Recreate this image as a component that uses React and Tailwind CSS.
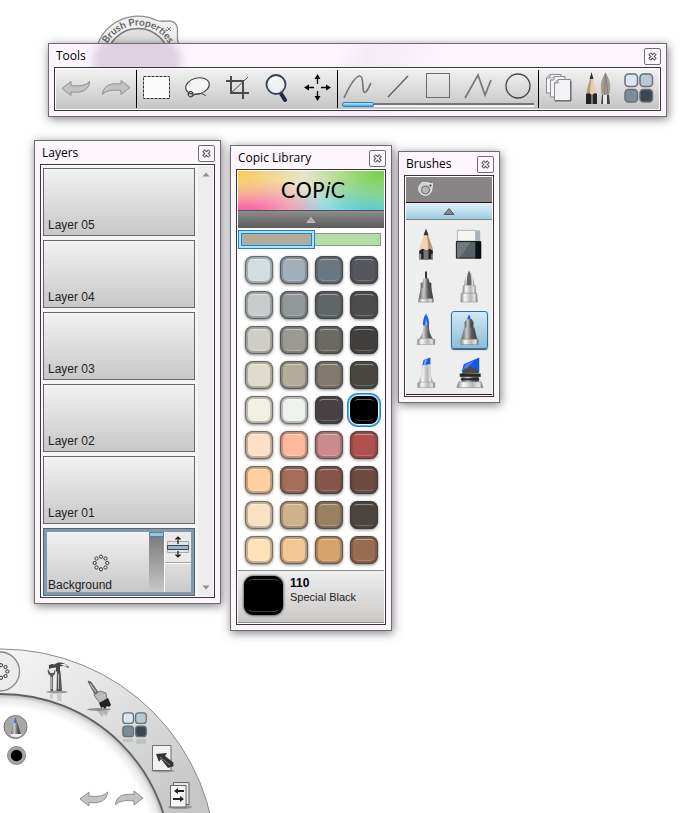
import React from "react";

const layers = ["Layer 05", "Layer 04", "Layer 03", "Layer 02", "Layer 01"];

const swatches = [
  "bg-[#d3dcde]", "bg-[#a2afba]", "bg-[#6b7780]", "bg-[#55565c]",
  "bg-[#c8cccc]", "bg-[#92989a]", "bg-[#606668]", "bg-[#4c4c4c]",
  "bg-[#cecdc7]", "bg-[#9a9993]", "bg-[#6a6964]", "bg-[#403f3d]",
  "bg-[#e0dacb]", "bg-[#b3ac9a]", "bg-[#81796e]", "bg-[#4a4740]",
  "bg-[#f2f0e2]", "bg-[#eef1ed]", "bg-[#474143]", "bg-[#000000]",
  "bg-[#fee0c6]", "bg-[#ffb99d]", "bg-[#cb8a8c]", "bg-[#b1504c]",
  "bg-[#ffcf9f]", "bg-[#a46c5a]", "bg-[#82564a]", "bg-[#6c4a42]",
  "bg-[#f9e2c1]", "bg-[#d1b18a]", "bg-[#988060]", "bg-[#4c443f]",
  "bg-[#ffe2b9]", "bg-[#f3c794]", "bg-[#d5a26b]", "bg-[#996b4f]",
];

function Panel({ title, place, children, backdrop }) {
  return (
    <section
      aria-label={title}
      className={`absolute border border-[#6f6b72] bg-[#fcf5fc] px-[5px] pb-[5px] shadow-[1px_2px_9px_rgba(0,0,0,0.5)] ${place}`}
    >
      {backdrop}
      <header className="relative flex h-[23px] items-center justify-between pl-0.5">
        <h2 className="font-['Open_Sans',sans-serif] text-xs leading-4 text-black">{title}</h2>
        <button
          aria-label={`Close ${title}`}
          className="mt-px flex size-[17px] items-center justify-center rounded-[2px] border border-[#716d76] bg-[#fdf9fe]"
        >
          <svg width="9" height="9" viewBox="0 0 9 9" fill="none">
            <path d="M1.5 1.5 7.5 7.5M7.5 1.5 1.5 7.5" stroke="#53535f" strokeWidth="3.6" />
            <path d="M2 2 7 7M7 2 2 7" stroke="#fff" strokeWidth="1.4" />
          </svg>
        </button>
      </header>
      <div className="relative border border-[#37373a] bg-white p-px">{children}</div>
    </section>
  );
}

function TurnArrow({ forward }) {
  return (
    <svg width="30" height="18" viewBox="0 0 30 18">
      <g transform={forward ? "rotate(180 15 9)" : undefined}>
        <TurnArrowShape />
      </g>
    </svg>
  );
}

function TurnArrowShape() {
  return (
    <path
      d="M1 9.500 10 2.500V6.500C17 7.500 25 7 28.500 2.500C28.500 10 22 14.500 10 13V16.500Z"
      fill="#c3c3c3"
      stroke="#8f8f8f"
      strokeLinejoin="round"
    />
  );
}

function FourSwatches() {
  return (
    <g stroke="#667078" strokeWidth="1.5">
      <rect x="1" y="1" width="12.500" height="12.500" rx="3.500" fill="#dce6ec" />
      <rect x="16" y="1" width="12.500" height="12.500" rx="3.500" fill="#b8cad3" />
      <rect x="1" y="16.500" width="12.500" height="12.500" rx="3.500" fill="#7b8c97" />
      <rect x="16" y="16.500" width="12.500" height="12.500" rx="3.500" fill="#3b4750" />
    </g>
  );
}

const icons = {
  marquee: (
    <svg width="28" height="24" viewBox="0 0 28 24">
      <rect x=".5" y=".5" width="26" height="22" fill="#f9f9f9" stroke="#333" strokeDasharray="3 1" />
    </svg>
  ),
  lasso: (
    <svg width="28" height="24" viewBox="0 0 28 24" fill="none" stroke="#3e3e3e">
      <ellipse cx="14.500" cy="10" rx="12" ry="8" transform="rotate(-14 14.500 10)" fill="#f4f4f4" strokeWidth="1.100" />
      <path d="M4 15C7 19 12 18 9 16 5 14 4 20 7 21 11 21 11 17 15 18 19 17 20 18 23 20" />
      <circle cx="7.500" cy="18" r="2.500" />
    </svg>
  ),
  crop: (
    <svg width="25" height="25" viewBox="0 0 25 25" fill="none" stroke="#4a4a4a">
      <path d="M6 1V18H24M1 6H18V24" strokeWidth="2" />
      <path d="M5 19 23 2" />
    </svg>
  ),
  zoom: (
    <svg width="24" height="28" viewBox="0 0 24 28">
      <path d="m15 18 5 8" stroke="#222b3d" strokeWidth="4" strokeLinecap="round" />
      <circle cx="11" cy="10.500" r="9.500" fill="#eef0f1" stroke="#34405a" strokeWidth="1.800" />
      <path d="M5 9A7 7 0 0 1 13 4" stroke="#fff" strokeWidth="2" fill="none" />
    </svg>
  ),
  move: (
    <svg width="27" height="27" viewBox="0 0 27 27">
      <path d="M13.500 3V10M13.500 17V24M3 13.500H10M17 13.500H24" stroke="#000" strokeWidth="1.300" />
      <path d="m13.500 0 3 5h-6zM13.500 27l3-5h-6zM0 13.500l5-3v6zM27 13.500l-5-3v6z" />
    </svg>
  ),
  curve: (
    <svg width="30" height="26" viewBox="0 0 30 26" fill="none">
      <path d="M1 25C6 14 12 3 17 3 21 3 19 17 21 19 23 21 26 14 28 10" stroke="#777" strokeWidth="1.700" />
    </svg>
  ),
  line: (
    <svg width="22" height="24" viewBox="0 0 22 24">
      <path d="M1 23 21 2" stroke="#666" strokeWidth="1.500" />
    </svg>
  ),
  square: (
    <svg width="24" height="25" viewBox="0 0 24 25">
      <rect x=".5" y=".5" width="23" height="24" fill="none" stroke="#6b6b6b" />
    </svg>
  ),
  zigzag: (
    <svg width="28" height="26" viewBox="0 0 28 26" fill="none">
      <path d="M1 25 14 2 21 22 27 7" stroke="#777" strokeWidth="1.700" />
    </svg>
  ),
  circle: (
    <svg width="26" height="26" viewBox="0 0 26 26">
      <circle cx="13" cy="13" r="12" fill="none" stroke="#454545" strokeWidth="1.300" />
    </svg>
  ),
  pages: (
    <svg width="28" height="29" viewBox="0 0 28 29" stroke="#8a8a8e">
      <path d="M5 1.500H16V20H1.500V5Z" fill="#f6f6f6" />
      <path d="M9 3.500H20V24H5.500V7Z" fill="#f6f6f6" />
      <path d="M13 6.500H25.500V27.500H9.500V10Z" fill="#f1f3f7" />
      <path d="M9.500 10H13V6.500M5.500 7H9V3.500M1.500 5H5V1.500" fill="none" />
      <path d="M10 28H26V8" stroke="#5f5f62" fill="none" />
    </svg>
  ),
  brushes: (
    <svg width="28" height="32" viewBox="0 0 28 32">
      <path d="M6.500 1 1 22h11z" fill="#e6cdb0" />
      <path d="M6.500 1 1 22l4-1z" fill="#b39a84" />
      <path d="M6.500 0 4.700 7h3.800z" fill="#333" />
      <path d="m1 22 3-1 3 2 3-2 2 1v10H1z" fill="#222" />
      <path d="M6 23h2v9H6z" fill="#777" />
      <path d="M20.500 0C15 10 15 15 17 23h7c2-8 2-13-3.500-23" fill="#a59c91" />
      <path d="m20.500 1-1 21M21 5l2 17" stroke="#7d756c" strokeWidth=".8" />
      <path d="M17 23h7l2 9H15z" fill="#e3e5e6" />
      <path d="M22 23h2l1 9h-3zM17 23h1v9h-2z" fill="#3e4245" />
    </svg>
  ),
  palette: (
    <svg width="30" height="30" viewBox="0 0 30 30"><FourSwatches /></svg>
  ),
};

function ToolButton({ label, children }) {
  return (
    <button aria-label={label} className="flex h-9 flex-1 items-center justify-center pb-[3px]">
      {children}
    </button>
  );
}

function Divider() {
  return <span className="h-[38px] w-px shrink-0 bg-black" />;
}

function ToolsPanel() {
  return (
    <Panel
      title="Tools"
      place="left-12 top-[43px] w-[619px]"
      backdrop={
        <div className="absolute inset-0 overflow-hidden bg-linear-115 from-[#fcf5fd] from-45% via-[#f4ecf4] via-50% to-[#fdf5fd] to-62%">
          <div className="absolute -top-2 left-11 h-10 w-22 rounded-t-3xl bg-[#ded1e0] blur-[4px]" />
        </div>
      }
    >
      <div className="flex h-10 items-center bg-linear-to-b from-[#f2f2f2] to-[#c5c5c5]">
        <div className="flex w-20 items-center">
          <ToolButton label="Undo"><TurnArrow /></ToolButton>
          <ToolButton label="Redo"><TurnArrow forward /></ToolButton>
        </div>
        <Divider />
        <div className="flex w-[200px] items-center">
          <ToolButton label="Rectangle select">{icons.marquee}</ToolButton>
          <ToolButton label="Lasso">{icons.lasso}</ToolButton>
          <ToolButton label="Crop">{icons.crop}</ToolButton>
          <ToolButton label="Zoom">{icons.zoom}</ToolButton>
          <ToolButton label="Move">{icons.move}</ToolButton>
        </div>
        <Divider />
        <div className="flex h-10 w-[200px] flex-col">
          <div className="flex h-8 items-start">
            <ToolButton label="Freehand">{icons.curve}</ToolButton>
            <ToolButton label="Line">{icons.line}</ToolButton>
            <ToolButton label="Rectangle">{icons.square}</ToolButton>
            <ToolButton label="Polyline">{icons.zigzag}</ToolButton>
            <ToolButton label="Ellipse">{icons.circle}</ToolButton>
          </div>
          <div className="ml-1 mt-px flex h-[5px] w-48 items-center">
            <span className="h-[5px] w-8 rounded-[2px] border border-[#2c7fb8] bg-linear-to-b from-[#b9e5fc] to-[#3fa9ea]" />
            <span className="h-1 flex-1 border-b-2 border-[#f4f4f4] bg-[#747474]" />
          </div>
        </div>
        <Divider />
        <div className="flex flex-1 items-center">
          <ToolButton label="Layers">{icons.pages}</ToolButton>
          <ToolButton label="Brushes">{icons.brushes}</ToolButton>
          <ToolButton label="Colors">{icons.palette}</ToolButton>
        </div>
      </div>
    </Panel>
  );
}

function LayersPanel() {
  return (
    <Panel title="Layers" place="left-[34px] top-[140px] w-[187px]">
      <div className="flex justify-between bg-[#f5f5f5] pl-px">
        <div className="flex w-[152px] flex-col gap-1 pt-0.5 font-['Liberation_Sans',Arial,sans-serif] text-xs leading-4 text-[#222]">
          {layers.map((name) => (
            <button
              key={name}
              className="flex h-[68px] items-end border border-[#69696b] bg-linear-to-b from-[#f2f2f2] to-[#c8c8c8] px-1 pb-0.5 text-left"
            >
              {name}
            </button>
          ))}
          <div className="flex h-[68px] border border-[#5b656d] bg-[#809aad] p-[3px]">
            <button className="relative flex flex-1 items-end bg-linear-to-b from-[#f2f2f2] to-[#c8c8c8] pl-px text-left leading-[14px]">
              Background
              <svg className="absolute right-[39px] top-[22px]" width="18" height="18" viewBox="0 0 18 18">
                <DotRing />
              </svg>
            </button>
            <input
              type="range"
              aria-label="Background opacity"
              defaultValue="100"
              className="m-0 h-full w-4 appearance-none border-r border-white bg-linear-to-b from-[#777] to-[#c8c8c8] [direction:rtl] [writing-mode:vertical-lr] [&::-webkit-slider-thumb]:h-[5px] [&::-webkit-slider-thumb]:w-[15px] [&::-webkit-slider-thumb]:appearance-none [&::-webkit-slider-thumb]:border [&::-webkit-slider-thumb]:border-[#4c84a6] [&::-webkit-slider-thumb]:bg-[#9dc4dc]"
            />
            <div className="flex w-[26px] flex-col bg-[#e9e9e9]">
              <button aria-label="Reorder layer" className="flex h-[31px] items-center justify-center border-b border-[#aaa59c]">
                <svg width="24" height="24" viewBox="0 0 24 24">
                  <path d="M1.500 6.500h21v11h-21z" fill="#e3e3e3" stroke="#aaa" />
                  <path d="M1.500 10.500h21v4h-21z" fill="#9db6c6" stroke="#314858" />
                  <path d="M12 9V2M9.500 4.500 12 2l2.500 2.500M12 16v6M9.500 19.500 12 22l2.500-2.500" fill="none" stroke="#111" strokeWidth="1.200" />
                </svg>
              </button>
              <span className="flex-1 border-t border-white bg-linear-to-b from-[#dedede] to-[#cacaca]" />
            </div>
          </div>
        </div>
        <div className="flex w-[15px] flex-col items-center justify-between bg-[#ededed] py-1.5">
          <button aria-label="Scroll up">
            <svg width="8" height="5" viewBox="0 0 8 5"><path d="m4 .5 3.500 4h-7z" fill="#8d8d8d" /></svg>
          </button>
          <button aria-label="Scroll down">
            <svg width="8" height="5" viewBox="0 0 8 5"><path d="m4 4.500 3.500-4h-7z" fill="#8d8d8d" /></svg>
          </button>
        </div>
      </div>
    </Panel>
  );
}

function DotRing() {
  return (
    <g fill="#eee" stroke="#333">
      <circle cx="9" cy="2.700" r="1.600" />
      <circle cx="13.500" cy="4.500" r="1.600" />
      <circle cx="15.300" cy="9" r="1.600" />
      <circle cx="13.500" cy="13.500" r="1.600" />
      <circle cx="9" cy="15.300" r="1.600" />
      <circle cx="4.500" cy="13.500" r="1.600" />
      <circle cx="2.700" cy="9" r="1.600" />
      <circle cx="4.500" cy="4.500" r="1.600" />
    </g>
  );
}

function CopicPanel() {
  return (
    <Panel title="Copic Library" place="left-[230px] top-[145px] w-[162px]">
      <div className="flex h-[39px] items-center justify-center bg-[radial-gradient(45%_90%_at_0%_0%,#ffc94f,transparent),radial-gradient(55%_95%_at_5%_110%,#ff4fa0,transparent),radial-gradient(55%_120%_at_100%_0%,#6fd044,transparent),radial-gradient(60%_100%_at_90%_110%,#3fccf5,transparent)] bg-[#e9e4cc]">
        <span className="pl-1 font-['DejaVu_Sans',sans-serif] text-[21px] leading-6 text-black">
          COP<i>i</i>C
        </span>
      </div>
      <button
        aria-label="Collapse library"
        className="flex h-[18px] w-full items-center justify-center border-t border-[#555] bg-linear-to-b from-[#8d8d8d] to-[#5b5b5b]"
      >
        <svg width="10" height="6" viewBox="0 0 10 6"><path d="m5 .5 4 5H1z" fill="#aaa" stroke="#ddd" strokeWidth=".7" /></svg>
      </button>
      <div className="flex items-center pr-[3px] pt-0.5">
        <button aria-label="Warm gray set" className="h-[19px] w-[77px] border border-[#1b83d4] bg-[#aee0fc] p-0.5">
          <span className="block h-full border border-[#1b83d4] bg-[#b3ac9a]" />
        </button>
        <button aria-label="Green set" className="h-[13px] flex-1 border border-l-0 border-[#8b9b87] bg-[#b0dea5]" />
      </div>
      <div className="grid grid-cols-4 gap-[7px] py-[7px] pl-[7px] pr-1.5">
        {swatches.map((tone, i) => (
          <button
            key={i}
            aria-label={`Swatch ${i + 1}`}
            className={`flex size-7 items-center justify-center rounded-[8px] ${tone} ${
              i === 19
                ? "shadow-[0_0_0_1px_#e8f6ff,0_0_0_2px_#5bb8ff,0_0_0_3px_#1b83d4]"
                : "shadow-[inset_0_0_1px_1px_rgba(50,50,50,0.6),inset_0_0_0_4px_rgba(70,70,70,0.3),0_1px_3px_rgba(0,0,0,0.5)]"
            }`}
          >
            <span className={`size-[22px] rounded-[5px] border border-x-transparent border-b-white/20 border-t-white/40 ${tone}`} />
          </button>
        ))}
      </div>
      <div className="-mt-px flex h-[53px] gap-[7px] border-y border-[#8e8e8e] bg-linear-to-b from-[#efefef] to-[#cbc9c8] pl-1.5 pt-1">
        <span className="mt-px flex size-[39px] items-center justify-center rounded-[9px] bg-black shadow-[0_0_3px_#000]">
          <span className="size-[33px] rounded-[6px] border border-x-transparent border-b-white/25 border-t-white/25" />
        </span>
        <div className="font-['Liberation_Sans',Arial,sans-serif] text-[11px] leading-3 text-[#222]">
          <strong className="block text-xs font-bold leading-4 text-black">110</strong>
          <span>Special Black</span>
        </div>
      </div>
    </Panel>
  );
}

function Metal({ id }) {
  return (
    <defs>
      <linearGradient id={id}>
        <stop offset="0" stopColor="#888" />
        <stop offset=".25" stopColor="#fafafa" />
        <stop offset=".6" stopColor="#b5b5b5" />
        <stop offset=".85" stopColor="#e6e6e6" />
        <stop offset="1" stopColor="#666" />
      </linearGradient>
      <linearGradient id={`${id}-dark`}>
        <stop offset="0" stopColor="#555" />
        <stop offset=".35" stopColor="#cdcdcd" />
        <stop offset=".65" stopColor="#5a5a5a" />
        <stop offset="1" stopColor="#3d3d3d" />
      </linearGradient>
    </defs>
  );
}

const brushArt = [
  ["Pencil", <>
    <path d="M17 4 10.500 23v4h14v-4z" fill="#ecd4b6" />
    <path d="m18 4 2 20 4.500 3v-4z" fill="#b3977b" />
    <path d="m17.500 2-2.500 7h5z" fill="#333" />
    <path d="m10.500 25 3.500-2 4 2 3-2 3.500 2v9h-14z" fill="#222" />
    <path d="m15 24 3 1 2-1v10h-5z" fill="#777" />
    <path d="M10.500 28h2v6h-2zM23 28h1.500v6H23z" fill="#999" />
  </>],
  ["Eraser", <>
    <path d="M5.500 4h19v11h-19z" fill="#f5f5f1" stroke="#999" strokeWidth=".7" />
    <path d="M24 4h5v11h-5z" fill="#aab3b9" />
    <path d="M4.500 15.500h25v17h-25z" fill="#56616a" stroke="#111" />
    <path d="M5 16h14L8 32H5z" fill="#87929a" opacity=".5" />
    <path d="M24 16h6v17h-6z" fill="#0b1115" />
  </>],
  ["Fine liner", <>
    <path d="M16.500 2h2v8h-2z" fill="#333" />
    <path d="M15 9h5l1 4 2 1v6H12v-6l2-1z" fill="url(#tip-dark)" />
    <path d="M12 19h11l2 11H10z" fill="url(#tip-dark)" />
    <path d="M10 30h15v3.500H10z" fill="url(#tip)" stroke="#777" strokeWidth=".6" />
  </>],
  ["Ball pen", <>
    <path d="M17.500 1c-3 4-5 10-5 16h10.500C23 11 21 5 17.500 1" fill="url(#tip)" />
    <path d="M17.500 1c-2 4-2.500 9-2.500 15h5c0-6-.5-11-2.500-15" fill="#666" />
    <path d="M11.500 16.500h12.500l.500 8H11z" fill="url(#tip)" stroke="#999" strokeWidth=".5" />
    <path d="M9.500 24.500h16l.500 9H9z" fill="url(#tip)" stroke="#8d929b" strokeWidth=".6" />
  </>],
  ["Brush marker", <>
    <path d="M17.500 1c-3 5-3.500 9-3 13h6c.5-4 0-8-3-13" fill="#235ee3" />
    <path d="m17.500 6-1 7H19z" fill="#8fb8ff" />
    <path d="M14.500 13h6c0 8 2 11 5.500 16H9c4-5 5.500-8 5.500-16" fill="url(#tip-dark)" />
    <path d="M9 27.500q9-2 17.500 0V33h-18z" fill="url(#tip)" stroke="#999" strokeWidth=".6" />
  </>],
  ["Marker", <>
    <path d="m15.500 8 1-4q1-3 2 0l1 4z" fill="#1f5ee6" />
    <path d="M15 7h5.500l1.500 3v6H13v-6z" fill="url(#tip-dark)" />
    <path d="M12.500 15.500h10.500l3 12.500H9.500z" fill="url(#tip-dark)" />
    <path d="M9 27.500h18V33H9z" fill="url(#tip)" stroke="#888" strokeWidth=".6" />
  </>],
  ["Chisel marker", <>
    <path d="m13.500 11 1.500-6.500L22 2v7z" fill="#1658ed" />
    <path d="m16 5 3-1.500-2 6h-2z" fill="#72a6ff" />
    <path d="m13.500 10 8.500-1v10l2.500 9H10l3.500-9z" fill="url(#tip)" stroke="#aaa" strokeWidth=".4" />
    <path d="M9 28q9-2 17.500 0v5H9z" fill="url(#tip)" stroke="#999" strokeWidth=".6" />
  </>],
  ["Wide marker", <>
    <path d="m10 17 2-8 16-7v15z" fill="#1556ed" />
    <path d="m14 9 9-4-8 10h-4z" fill="#4382fb" />
    <path d="m10 19 3-6 2 1 3-4 4 4 3-2 3 6z" fill="#4a4a4a" />
    <path d="M8 18.500h21.500V22H8z" fill="#292929" />
    <path d="M10 22h17.500v6H10z" fill="url(#tip-dark)" />
    <path d="m7 27-2 6h27l-2-6z" fill="url(#tip)" stroke="#888" strokeWidth=".6" />
    <path d="M9 24.500h19" stroke="#222" strokeWidth="2" />
  </>],
];

function BrushesPanel() {
  return (
    <Panel title="Brushes" place="left-[398px] top-[151px] w-[102px]">
      <div className="bg-[#eee] pb-0.5">
        <div className="flex h-[26px] items-center border-b border-[#350b10] bg-[#878585] pl-3">
          <svg width="16" height="16" viewBox="0 0 16 16">
            <path d="M14.500 1.500 12 1.800A6.700 6.700 0 1 0 14 6z" fill="#cfcfcf" stroke="#eee" />
            <circle cx="7.500" cy="8" r="4" fill="#b9b9b9" stroke="#666" />
            <circle cx="12.500" cy="3.500" r="1" fill="#333" />
          </svg>
        </div>
        <button
          aria-label="Collapse brushes"
          className="flex h-[17px] w-full items-center justify-center border-b border-[#75858e] bg-linear-to-b from-[#e2f2fb] to-[#9fcbe0]"
        >
          <svg width="12" height="7" viewBox="0 0 12 7"><path d="m6 .5 5 6H1z" fill="#858585" stroke="#444" strokeWidth=".8" /></svg>
        </button>
        <svg className="absolute" width="0" height="0"><Metal id="tip" /></svg>
        <div className="grid grid-cols-2 gap-x-1.5 gap-y-[5px] pl-0.5 pr-1 pt-[5px]">
          {brushArt.map(([name, art], i) => (
            <button
              key={name}
              aria-label={name}
              className={
                i === 5
                  ? "h-[38px] rounded-[3px] border border-[#2475a8] bg-linear-to-b from-[#d3e9f4] to-[#8dbdd6] shadow-[0_1px_1px_#456]"
                  : "h-[38px] border border-transparent"
              }
            >
              <svg className="w-full" height="36" viewBox="0 0 36 36">{art}</svg>
            </button>
          ))}
        </div>
      </div>
      <div className="h-px bg-[#481318]" />
    </Panel>
  );
}

function BrushProperties() {
  return (
    <svg className="absolute left-[90px] top-2.5" width="96" height="40" viewBox="90 10 96 40">
      <defs>
        <linearGradient id="puck" x1="0" y1="0" x2="0" y2="1">
          <stop offset="0" stopColor="#e2e2e2" />
          <stop offset="1" stopColor="#bbb" />
        </linearGradient>
        <path id="puck-arc" d="M103.500 60A34.500 34.500 0 0 1 172.500 60" />
      </defs>
      <path
        d="M95 59A43 43 0 0 1 157 20.500C161 22 165 21 170 21Q177 22 177.500 29V40L181 50V59Z"
        fill="#f0f0f0"
        stroke="#8f8f8f"
        strokeWidth="1.300"
      />
      <circle cx="138" cy="60" r="31.500" fill="url(#puck)" stroke="#777" strokeWidth="1.500" />
      <text fill="#666" textAnchor="middle" className="font-['Lato',sans-serif] text-[10px] font-bold">
        <textPath href="#puck-arc" startOffset="50%">Brush Properties</textPath>
      </text>
      <path d="m167 27 4 4m0-4-4 4" stroke="#777" />
    </svg>
  );
}

function Wheel() {
  return (
    <svg className="absolute bottom-0 left-0" width="220" height="173" viewBox="0 640 220 173">
      <defs>
        <linearGradient id="ring" gradientUnits="userSpaceOnUse" x1="0" y1="650" x2="150" y2="830">
          <stop offset="0" stopColor="#f5f5f5" />
          <stop offset=".45" stopColor="#e3e3e3" />
          <stop offset="1" stopColor="#c6c6c6" />
        </linearGradient>
        <radialGradient id="well" gradientUnits="userSpaceOnUse" cx="1" cy="864" r="170">
          <stop offset=".92" stopColor="#fff" />
          <stop offset=".97" stopColor="#e8e8e8" />
          <stop offset="1" stopColor="#b5b5b5" />
        </radialGradient>
        <Metal id="wheel" />
      </defs>
      <circle cx="1" cy="864" r="215" fill="url(#ring)" stroke="#8c8c8c" />
      <circle cx="1" cy="864" r="170" fill="url(#well)" stroke="#606060" strokeWidth="1.800" />
      <circle cx="0" cy="671.500" r="19.500" fill="#ececec" stroke="#888" strokeWidth="1.300" />
      <g transform="translate(-8 662.500)"><DotRing /></g>

      <g>
        <ellipse cx="57" cy="692" rx="11" ry="1.500" fill="#777" opacity=".7" />
        <path d="M55 664c3-2.500 9-2.500 14 3l-1 1c-3-2.500-6-2.500-8-1.500v5h-4v-4l-4 .500-3 1v-4l3-1 3 .500z" fill="#444" />
        <path d="m60 664 5 0 3 3-5-1.500z" fill="#eee" />
        <path d="M57 671h3.500l1.500 20h-5.500z" fill="#555" />
        <path d="M58.500 674v15" stroke="#bbb" />
        <path d="M48 669c-1 4 1 6 2.500 7v15h2.500v-15c2-1 3-4 2-7l-1.500 4h-3z" fill="#5c5c5c" />
        <path d="M51.700 677v12" stroke="#ddd" strokeWidth=".8" />
        <path d="M50 694h3v5h-3zM57 694h4l1 7h-5z" fill="#999" opacity=".35" />
      </g>

      <g>
        <ellipse cx="99" cy="709.500" rx="12" ry="1.500" fill="#777" opacity=".8" />
        <path d="m88 681 3 1 7 10-3 2.500-6-11z" fill="#727272" stroke="#444" strokeWidth=".6" />
        <path d="m90 684 6 8" stroke="#ccc" />
        <path d="m94 695 6-4 6 2 1 7-7 3-4-5z" fill="#bbb" stroke="#555" strokeWidth=".7" />
        <path d="m99 703 9-5 3 7-2 2-2-1-2 3-2-2-2 1z" fill="#222" />
        <path d="m97 711 12 0-3 5-2-2-2 3-3-4z" fill="#777" opacity=".4" />
      </g>

      <g transform="translate(122 712) scale(.85)"><FourSwatches /></g>
      <g fill="#76828a" opacity=".25">
        <rect x="123" y="739" width="10" height="3" rx="1" />
        <rect x="136" y="739" width="10" height="5" rx="1" />
      </g>

      <ellipse cx="163" cy="771" rx="12" ry="1.500" fill="#777" opacity=".6" />
      <path d="M152.500 745.500h18.500v25h-18.500z" fill="#f2f2f2" stroke="#707070" />
      <path d="m156 754 11-1-2 3 9 7-1 1 1 2-6 2-7-9-2 3z" fill="#333" />
      <path d="m160 757 10 8" stroke="#888" />

      <ellipse cx="180" cy="807" rx="12" ry="2" fill="#777" opacity=".6" />
      <path d="M173.500 782.500h15.500v22h-15.500z" fill="#e4e4e4" stroke="#666" />
      <path d="M170.500 785.500h15.500v21.500h-15.500z" fill="#f5f5f5" stroke="#666" />
      <path d="m174 791 4-3v2h6v2h-6v2zM184 799l-4-3v2h-7v2h7v2z" fill="#222" />

      <circle cx="15.500" cy="727" r="11.500" fill="#a8a8a8" stroke="#777" />
      <path d="m10.500 736 3-13h4l4 13z" fill="url(#wheel-dark)" />
      <path d="m14 723 1-5h1l1 5z" fill="#3a6edb" />
      <path d="M10 734h12l-1 2q-5 2-10 0z" fill="#eee" />
      <circle cx="16.500" cy="755.500" r="9" fill="#a3a3a3" stroke="#8a8a8a" />
      <circle cx="16.500" cy="755.500" r="5.700" />

      <g transform="translate(79 789.500)"><TurnArrowShape /></g>
      <g transform="translate(144 807.500) rotate(180)"><TurnArrowShape /></g>
    </svg>
  );
}

export default function App() {
  return (
    <main className="relative min-h-screen overflow-hidden bg-white">
      <BrushProperties />
      <ToolsPanel />
      <LayersPanel />
      <CopicPanel />
      <BrushesPanel />
      <Wheel />
    </main>
  );
}
